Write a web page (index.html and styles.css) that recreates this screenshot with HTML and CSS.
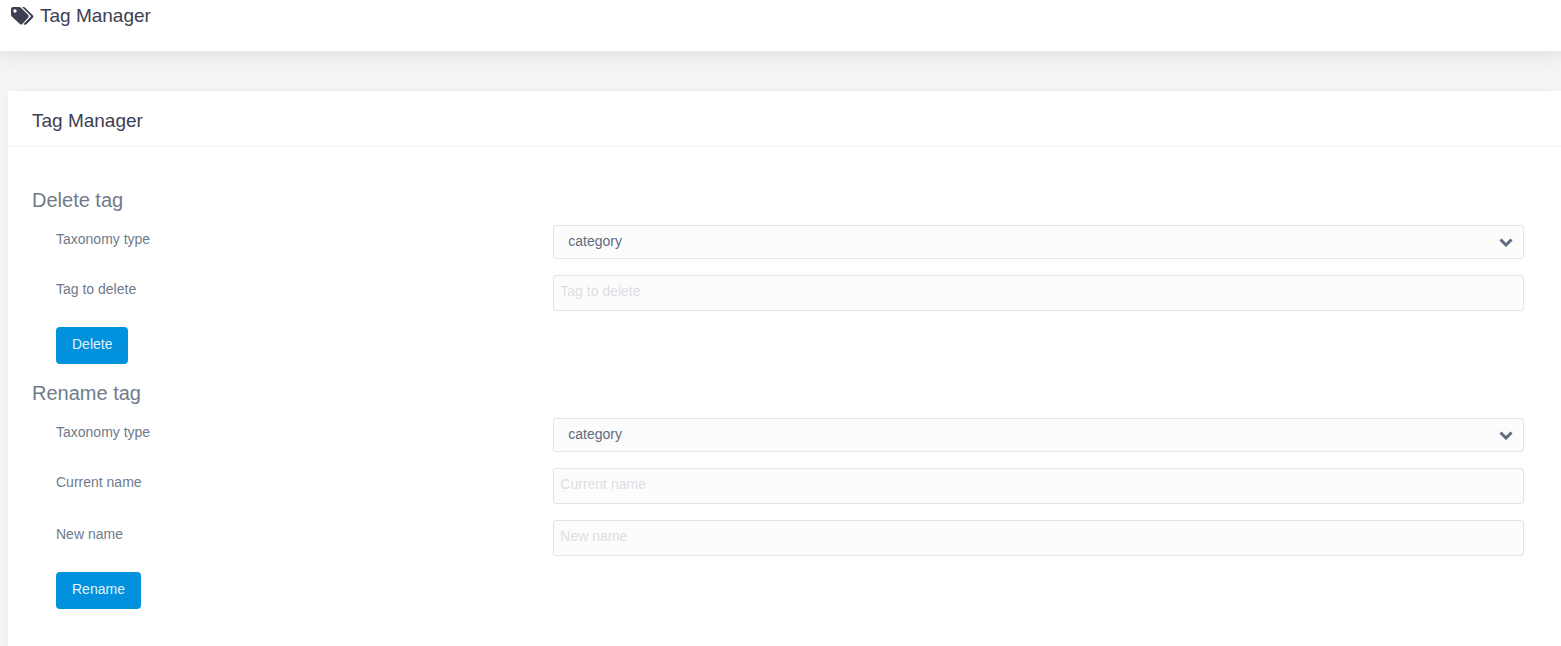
FILE: index.html
```html
<!DOCTYPE html>
<html lang="en">
<head>
    <meta charset="UTF-8">
    <meta name="viewport" content="width=device-width, initial-scale=1.0">
    <title>Tag Manager</title>
    <link rel="stylesheet" href="styles.css">
</head>
<body>
    <header class="header">
        <svg class="tags-icon" viewBox="0 0 23 18" aria-hidden="true">
            <path fill-rule="evenodd" d="M0 2C0 .9.9 0 2 0h6c.8 0 1.400.200 2 .8l7.200 7.300c.7.700.7 1.700 0 2.400l-5.900 6.400c-.7.700-1.700.700-2.400 0L.8 9.600C.3 9.100 0 8.500 0 7.800zM4 2.300a1.700 1.700 0 1 0 0 3.400 1.700 1.700 0 0 0 0-3.400z"/>
            <path d="M11 0h1.200c.8 0 1.500.3 2 .8l7.600 7.400c.8.800.8 1.800 0 2.600l-6.100 6.300c-.8.800-2 .9-2.900.1l-.3-.3 7-6.900c.4-.4.400-1 0-1.400z"/>
        </svg>
        <h1 class="title">Tag Manager</h1>
    </header>
    <main class="card">
        <div class="card-header">
            <h2 class="title">Tag Manager</h2>
        </div>
        <div class="card-body">
            <h3>Delete tag</h3>
            <form class="tag-form">
                <div class="form-group">
                    <label for="deleteType">Taxonomy type</label>
                    <div class="select-box">
                        <select id="deleteType" name="type">
                            <option>category</option>
                        </select>
                        <svg class="arrow" viewBox="0 0 14 10" aria-hidden="true"><path d="M1.500 2.500l5.500 5.500L12.500 2.500"/></svg>
                    </div>
                </div>
                <div class="form-group">
                    <label for="deleteTag">Tag to delete</label>
                    <input type="text" id="deleteTag" name="tag" placeholder="Tag to delete">
                </div>
                <button type="button">Delete</button>
            </form>
            <h3>Rename tag</h3>
            <form class="tag-form">
                <div class="form-group">
                    <label for="renameType">Taxonomy type</label>
                    <div class="select-box">
                        <select id="renameType" name="type">
                            <option>category</option>
                        </select>
                        <svg class="arrow" viewBox="0 0 14 10" aria-hidden="true"><path d="M1.500 2.500l5.500 5.500L12.500 2.500"/></svg>
                    </div>
                </div>
                <div class="form-group">
                    <label for="currentName">Current name</label>
                    <input type="text" id="currentName" name="current" placeholder="Current name">
                </div>
                <div class="form-group">
                    <label for="newName">New name</label>
                    <input type="text" id="newName" name="new" placeholder="New name">
                </div>
                <button type="button">Rename</button>
            </form>
        </div>
    </main>
</body>
</html>
```
FILE: styles.css
```css
* {
    margin: 0;
    padding: 0;
    box-sizing: border-box;
    font-family: "Liberation Sans", Arial, sans-serif;
}
body {
    display: flex;
    flex-direction: column;
    min-height: 100vh;
    background-color: #f5f5f5;
    color: #6f7b8c;
    font-size: 14px;
}
.header {
    display: flex;
    align-items: center;
    gap: 6px;
    padding: 4px 11px 23px;
    background-color: #fff;
    box-shadow: 0 0 20px 4px rgba(0, 0, 0, 0.09);
}
.tags-icon {
    width: 23px;
    height: 18px;
    fill: #3d4052;
}
.title {
    color: #3d4052;
    font-size: 19px;
    font-weight: normal;
    line-height: 24px;
}
.card {
    flex: 1;
    margin: 40px 0 0 8px;
    background-color: #fff;
    box-shadow: 0 0 12px rgba(0, 0, 0, 0.04);
}
.card-header {
    padding: 18px 24px 13px;
    border-bottom: 1px solid #f4f4f5;
}
.card-body {
    padding: 40px 24px 24px;
}
h3 {
    margin-bottom: 12px;
    font-size: 20px;
    font-weight: normal;
    line-height: 26px;
}
/* Forms */
.tag-form {
    padding: 0 13px 16px 24px;
}
.form-group {
    display: grid;
    grid-template-columns: 1fr 2fr;
    column-gap: 12px;
    align-items: start;
    margin-bottom: 16px;
}
label {
    line-height: 29px;
}
.select-box {
    display: grid;
    align-items: center;
}
.select-box > * {
    grid-area: 1 / 1;
}
input,
select {
    width: 100%;
    border: 1px solid #e2e3e6;
    border-radius: 3px;
    background-color: #fcfcfc;
    color: #5f6b7d;
    font-size: 14px;
}
input {
    height: 36px;
    padding: 0 6px 4px;
}
select {
    height: 34px;
    padding: 0 14px 2px;
    appearance: none;
}
input::placeholder {
    color: #dcdee3;
    opacity: 1;
}
.arrow {
    justify-self: end;
    width: 14px;
    height: 10px;
    margin-right: 11px;
    fill: none;
    stroke: #5f6b80;
    stroke-width: 3px;
    pointer-events: none;
}
button {
    display: block;
    height: 37px;
    padding: 0 16px 4px;
    border: none;
    border-radius: 4px;
    background-color: #0090dc;
    color: #e3f2fb;
    font-size: 14px;
    cursor: pointer;
}
```
